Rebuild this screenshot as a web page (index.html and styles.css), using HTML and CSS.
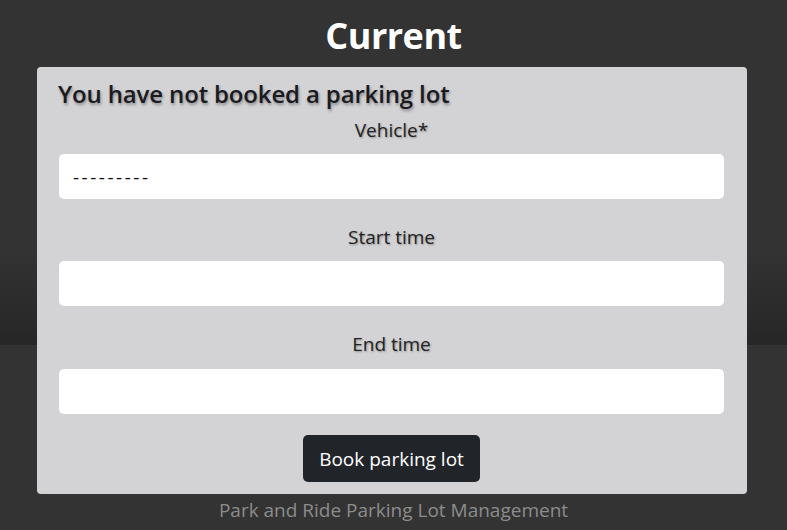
FILE: index.html
```html
<!DOCTYPE html>
<html lang="en">
<head>
    <meta charset="UTF-8">
    <meta name="viewport" content="width=device-width, initial-scale=1.0">
    <title>Current</title>
    <link rel="stylesheet" href="styles.css">
</head>
<body>
    <h1 class="page-title">Current</h1>

    <div class="booking-card">
        <h2 class="booking-title">You have not booked a parking lot</h2>
        <form class="booking-form">
            <label class="field-label" for="vehicle">Vehicle*</label>
            <select class="field-input field-select" id="vehicle">
                <option>---------</option>
            </select>

            <label class="field-label" for="start">Start time</label>
            <input class="field-input" id="start" type="text">

            <label class="field-label field-label-last" for="end">End time</label>
            <input class="field-input field-last" id="end" type="text">

            <button class="book-btn" type="button">Book parking lot</button>
        </form>
    </div>

    <footer class="site-footer">
        Park and Ride Parking Lot Management
    </footer>
</body>
</html>
```

FILE: styles.css
```css
html {
    background: #333333;
}
body {
    margin: 0;
    padding: 0;
    min-height: 530px;
    font-family: 'Open Sans', 'Noto Sans', sans-serif;
    background: linear-gradient(to bottom, #333333 0, #333333 250px, #262626 345px, #333333 345px, #333333 100%);
    color: #212529;
}
.page-title {
    margin: 0;
    padding-top: 12px;
    height: 55px;
    box-sizing: border-box;
    text-align: center;
    color: #ffffff;
    font-size: 36px;
    font-weight: 700;
    line-height: 48px;
    letter-spacing: -0.5px;
}
.booking-card {
    margin: 12px 40px 0 37px;
    background: #d3d3d6;
    border-radius: 4px;
    padding: 10px 23px 12px 22px;
}
.booking-title {
    margin: 0 0 0 -1px;
    font-size: 24px;
    font-weight: 600;
    line-height: 34px;
    color: #1b1b1f;
    letter-spacing: -0.15px;
    text-shadow: 1px 2px 3px rgba(0, 0, 0, 0.35);
}
.booking-form {
    display: flex;
    flex-direction: column;
}
.field-label {
    text-align: center;
    font-size: 19px;
    line-height: 26px;
    color: #222;
    text-shadow: 1px 1px 2px rgba(0, 0, 0, 0.3);
    margin: 0 0 11px;
}
.booking-form .field-label:first-child {
    margin-top: 6px;
}
.field-label-last {
    margin-bottom: 12px;
}
.field-input {
    height: 45px;
    box-sizing: border-box;
    border: none;
    border-radius: 5px;
    background: #ffffff;
    margin-bottom: 25px;
    font-family: inherit;
    font-size: 19px;
    padding: 0 14px;
    color: #212529;
}
.field-select {
    appearance: none;
    -webkit-appearance: none;
    letter-spacing: 2.5px;
    color: #111;
}
.field-last {
    margin-bottom: 21px;
}
.book-btn {
    align-self: center;
    height: 47px;
    padding: 0 16px;
    border: none;
    border-radius: 5px;
    background: #212529;
    color: #ffffff;
    font-family: inherit;
    font-size: 19px;
}
.site-footer {
    text-align: center;
    color: #8c8c8c;
    font-size: 19px;
    line-height: 26px;
    padding-top: 3px;
}
```
